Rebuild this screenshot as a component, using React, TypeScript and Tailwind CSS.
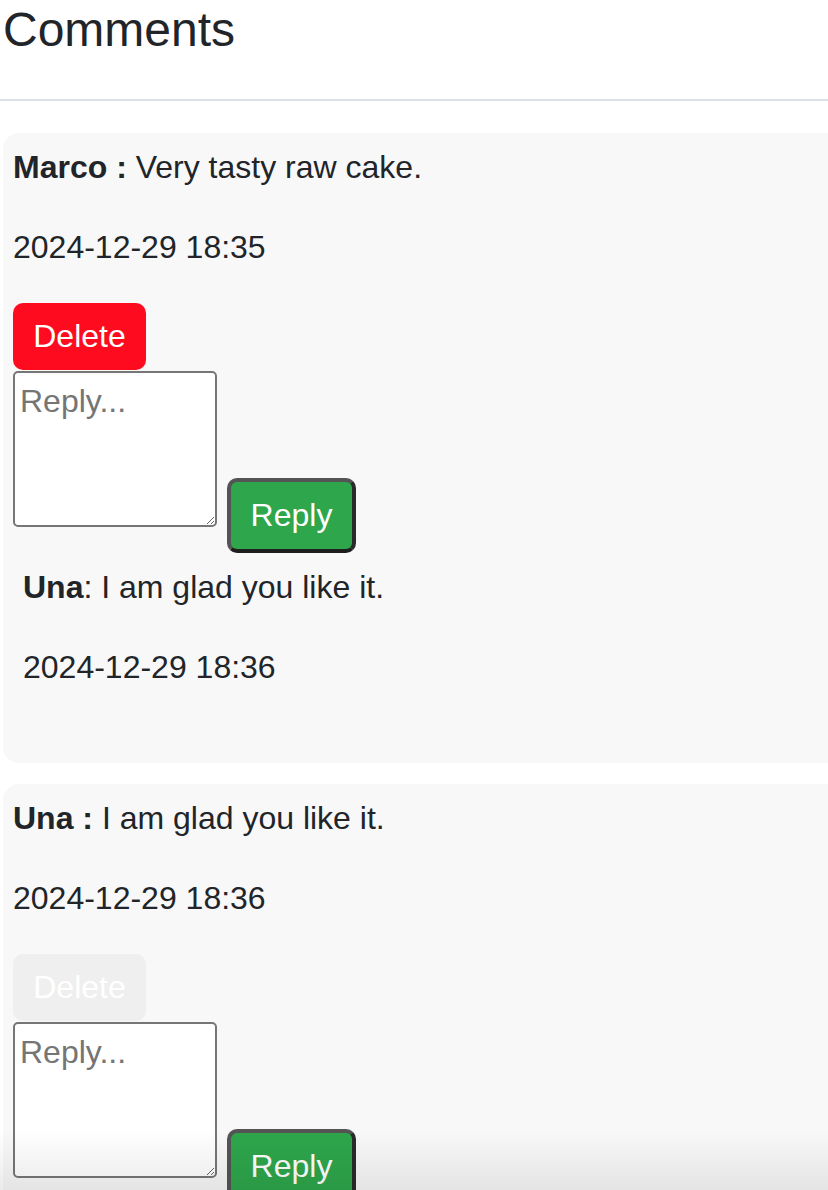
import React from "react";

function ReplyForm() {
  return (
    <div className="flex items-start">
      <textarea
        placeholder="Reply..."
        className="mt-px w-[204px] h-[156px] resize border-2 border-[#767676] rounded-[5px] bg-white px-[5px] py-[4px] text-[32px] leading-[1.5] text-[#212529] placeholder:text-[#757575] outline-none"
      />
      <button className="ml-[10px] mt-[108px] w-[129px] h-[75px] rounded-[10px] border-4 border-[#545454] border-r-[#2a2a2a] border-b-[#1e1e1e] bg-[#2ea64b] text-white text-[32px] leading-[1.15] flex items-center justify-center">
        Reply
      </button>
    </div>
  );
}

function Card({
  author,
  text,
  date,
  disabled,
  children,
}: {
  author: string;
  text: string;
  date: string;
  disabled?: boolean;
  children?: React.ReactNode;
}) {
  return (
    <div className="ml-[3px] w-[860px] bg-[#f8f8f8] rounded-[16px] pt-[10px] px-[10px] pb-[10px]">
      <p className="h-[48px] leading-[48px] mb-[32px]">
        <b>{author} :</b> {text}
      </p>
      <p className="h-[48px] leading-[48px] mb-[32px]">{date}</p>
      <button
        className={
          disabled
            ? "block w-[133px] h-[67px] rounded-[10px] bg-[#efefef] text-white text-[32px] leading-[1.15]"
            : "block w-[133px] h-[67px] rounded-[10px] bg-[#fe0b1f] text-white text-[32px] leading-[1.15]"
        }
      >
        Delete
      </button>
      <ReplyForm />
      {children}
    </div>
  );
}

export default function App() {
  return (
    <div
      className="relative w-[828px] h-[1190px] overflow-hidden bg-white text-[#212529] text-[32px]"
      style={{ fontFamily: '"Liberation Sans", Arial, Helvetica, sans-serif' }}
    >
      <h2 className="mt-px pl-[3px] h-[58px] text-[48px] leading-[1.2] font-normal">Comments</h2>
      <div className="mt-[40px] h-[2px] w-full bg-[#dee2e6]" />
      <div className="mt-[32px] flex flex-col gap-[21px]">
        <Card author="Marco" text="Very tasty raw cake." date="2024-12-29 18:35">
          <div className="pt-[10px] pl-[10px] pb-[30px]">
            <p className="h-[48px] leading-[48px] mb-[32px]">
              <b>Una</b>: I am glad you like it.
            </p>
            <p className="h-[48px] leading-[48px] mb-[32px]">2024-12-29 18:36</p>
          </div>
        </Card>
        <Card author="Una" text="I am glad you like it." date="2024-12-29 18:36" disabled />
      </div>
      <div className="pointer-events-none absolute inset-x-0 bottom-0 h-[60px] bg-linear-to-b from-transparent to-black/[0.08]" />
    </div>
  );
}
